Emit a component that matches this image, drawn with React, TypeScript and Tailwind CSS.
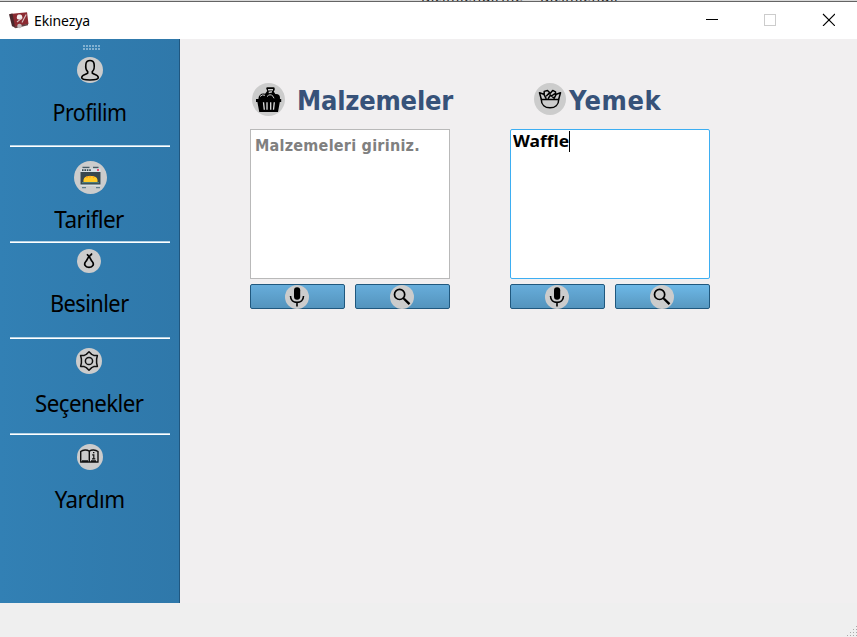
import type { ReactNode } from "react";

const sans = "font-['Noto_Sans','Liberation_Sans',sans-serif]";
const bold = "font-['DejaVu_Sans_Condensed','DejaVu_Sans',sans-serif] font-bold [font-stretch:condensed]";

function Profile() {
  return (
    <svg viewBox="0 0 26 26" className="size-[26px] shrink-0">
      <circle cx="13" cy="13" r="13" fill="#ccc" />
      <path d="M10.7 16.2 V14.6 C8.9 13 8.5 9.8 8.9 7 C9.3 4.5 11 3.5 13 3.5 S16.7 4.5 17.1 7 C17.5 9.8 17.1 13 15.3 14.6 V16.2 C17.5 18 21.3 17.6 21.3 20.8 C21.3 22.6 17.5 23 13 23 S4.7 22.6 4.7 20.8 C4.7 17.6 8.5 18 10.7 16.2 Z" fill="none" stroke="#000" strokeWidth="1.6" />
    </svg>
  );
}

function Oven() {
  return (
    <svg viewBox="0 0 33 33" className="ml-px size-[33px] shrink-0">
      <circle cx="16.5" cy="16.5" r="16.5" fill="#ccc" />
      <path d="M8.5 6.5h7M19 6.5h5.5" stroke="#455a64" strokeWidth="1.3" />
      <rect x="6.5" y="7.5" width="20" height="17.5" fill="#d7dfe3" />
      <path d="M8 9.2h9" stroke="#37474f" strokeWidth="1.8" strokeDasharray="1.6 .8" />
      <circle cx="24" cy="9.1" r="1" fill="#e91e4d" />
      <rect x="6.5" y="11" width="20" height="12.5" fill="#37474f" />
      <path d="M8 21.7h17" stroke="#548a86" />
      <path d="M9.5 21 C9 17 11 15 16.5 15 S24 17 23.5 21Z" fill="#ffca28" />
      <path d="M13 15v2M16 14.8v2M19.5 15v2" stroke="#fb9826" strokeWidth="1.2" />
      <path d="M8 26.7h4M22 26.7h4" stroke="#607d8b" strokeWidth="1.3" />
    </svg>
  );
}

function Pear() {
  return (
    <svg viewBox="0 0 24 24" className="mr-[2px] size-6 shrink-0">
      <circle cx="12" cy="12" r="12" fill="#ccc" />
      <path d="M12 8 C10.6 8.5 10.2 11 8.8 12.5 C6.5 15 8 18.3 12 18.3 S17.5 15 15.2 12.5 C13.8 11 13.4 8.5 12 8Z M12 8 L15 4.5 M12.2 7.7 L10 5.2 M12.5 6.5 L14.8 5.5" fill="none" stroke="#000" strokeWidth="1.7" />
    </svg>
  );
}

function Gear() {
  return (
    <svg viewBox="0 0 26 26" className="mr-[2px] size-[26px] shrink-0">
      <circle cx="13" cy="13" r="13" fill="#ccc" />
      <path d="M10.3 6.4 L13 3.8 L15.7 6.4 L17.8 7.4 L21.4 7.6 L20.6 11 V15 L21.4 18.4 L17.8 18.6 L15.7 19.6 L13 22.2 L10.3 19.6 L8.2 18.6 L4.6 18.4 L5.4 15 V11 L4.6 7.6 L8.2 7.4Z" fill="none" stroke="#111" strokeWidth="1.5" strokeLinejoin="round" />
      <circle cx="13" cy="13" r="3.6" fill="none" stroke="#111" strokeWidth="1.5" />
    </svg>
  );
}

function Book() {
  return (
    <svg viewBox="0 0 26 26" className="size-[26px] shrink-0">
      <circle cx="13" cy="13" r="13" fill="#ccc" />
      <path d="M3.7 17.5 V7.5 C6 5.7 10 5.5 12.3 7.2 C14.5 5.5 18.5 5.7 21 7.5 V17.5 M12.3 7V17.2 M3.1 18H21.6 M5 17h6M14 17h5" fill="none" stroke="#111" strokeWidth="1.4" />
      <path d="M15.2 10.8h1.6v4M15 14.8h3.3M16 8.7h1.4" fill="none" stroke="#111" strokeWidth="1.2" />
    </svg>
  );
}

function Basket() {
  return (
    <svg viewBox="0 0 33 33" className="size-[33px] shrink-0">
      <circle cx="16.5" cy="16.5" r="16.5" fill="#ccc" />
      <path d="M14.2 5.4 Q14.2 4.2 15.4 4.2 H21.5 Q22.7 4.2 22.7 5.5 V7 L21.7 8.5 L24 12 V16 H13 V11 L15.2 8Z" fill="#000" />
      <path d="M16 6.7h5M16.7 9.5l3.2-.7" stroke="#ccc" strokeWidth="1.4" />
      <circle cx="11.5" cy="15.5" r="5" fill="#000" />
      <circle cx="24" cy="15" r="4" fill="#000" />
      <path d="M8 13.5q2-2.5 5-1.2M15 13.6q3-3.5 6-.3l1 2" fill="none" stroke="#ccc" strokeWidth="1" />
      <path d="M4 16h25.2v3h-1.4L26 29H7.3L5.4 19H4Z" fill="#000" />
      <path d="M11.5 19.3l.8 7.5M15 19.3v7.5M18.7 19.3v7.5M22.3 19.3l-.8 7.5" stroke="#ddd" strokeWidth="1.3" />
    </svg>
  );
}

function Bowl() {
  return (
    <svg viewBox="0 0 32 32" className="size-8 shrink-0">
      <circle cx="16" cy="16" r="16" fill="#ccc" />
      <path d="M7.3 16.4h17.4C24.7 22 21 24.8 16 24.8S7.3 22 7.3 16.4Z" fill="none" stroke="#000" strokeWidth="1.5" />
      <path d="M7.3 16.2L5.5 9.7L9.8 11.2L12.3 15.8M24.7 16.2L26.5 9.7L22.3 11.2L19.8 15.8M10.2 11.5V8.4L13.5 7.5L15.6 9.5L12.2 13.2M13.8 11.5L16.5 10M16.3 10.2L18.7 7.4L21.5 8.9V12M14 15.8L16.5 12L20 15.2M17.5 13L20.8 10.7" fill="none" stroke="#000" strokeWidth="1.5" strokeLinejoin="round" />
    </svg>
  );
}

function Mic() {
  return (
    <svg viewBox="0 0 24 24" className="size-6 shrink-0">
      <circle cx="12" cy="12" r="12" fill="#ccc" />
      <rect x="9" y="2.2" width="6.2" height="12.5" rx="3" fill="#000" />
      <path d="M5.5 11 C5.5 19.5 18.5 19.5 18.5 11M12 17.5v4" fill="none" stroke="#000" strokeWidth="1.6" />
    </svg>
  );
}

function Lens() {
  return (
    <svg viewBox="0 0 24 24" className="size-6 shrink-0">
      <circle cx="12" cy="12" r="12" fill="#ccc" />
      <circle cx="9.6" cy="9.4" r="5.1" fill="none" stroke="#000" strokeWidth="1.7" />
      <path d="M13 12.8l1.5 1.5" stroke="#000" strokeWidth="1.7" />
      <path d="M14.2 14L19.5 19.1" stroke="#000" strokeWidth="2.4" />
    </svg>
  );
}

function NavItem({ icon, label, pad, gap, width }: { icon: ReactNode; label: string; pad: string; gap: string; width: string }) {
  return (
    <div className={`flex h-24 w-[179px] shrink-0 flex-col items-center ${pad}`}>
      {icon}
      <span className={`text-[24px] leading-7 tracking-[-0.6px] whitespace-nowrap text-black ${gap} ${width}`}>{label}</span>
    </div>
  );
}

function Separator() {
  return <div className="-mt-[2px] mr-[9px] ml-[10px] h-[2px] shrink-0 border-t border-[#b7d3e5] bg-white" />;
}

function Action({ children, bright }: { children: ReactNode; bright?: boolean }) {
  return (
    <button className={`flex h-[25px] w-[95px] items-center justify-center rounded-[2px] border border-[#20587e] bg-linear-to-b pr-px ${bright ? "from-[#6db8e7] to-[#5898c0]" : "from-[#67addb] to-[#5494bd]"}`}>
      {children}
    </button>
  );
}

function AppIcon() {
  return (
    <svg viewBox="0 0 20 19" className="h-[19px] w-5">
      <path d="M1 3L18 1.3L19.5 13L5 16.5Z" fill="#8c2a31" />
      <path d="M0 3.2l3.5-.7L6 16.3l-3-1Z" fill="#49282c" />
      <path d="M5 15.8l14-3.1v1.6L6.5 17.3Z" fill="#5d4446" />
      <path d="M8 5.2C8 3 13 3 13.2 5.5C14 7.7 12.5 9 10.8 8.4C8.5 9 7.2 7.5 8 5.2Z" fill="#f4eeee" />
      <path d="M8 11l4.5-3.6M13 11.5l4.2-8" stroke="#d7c1c3" strokeWidth="1.1" />
      <circle cx="10.5" cy="15" r="2.3" fill="#c5bdbd" />
    </svg>
  );
}

const gripRows = [1, 2, 3, 4];

export default function App() {
  return (
    <div className={`flex h-[637px] w-[857px] flex-col overflow-hidden bg-[#f1eff0] ${sans}`}>
      <div className="flex h-[2px] shrink-0 items-end overflow-hidden border-b border-[#646464] bg-[#d9d9d9] pl-[421px] text-[14px] leading-3 tracking-[0.55px] text-[#222]">
        <span className="mb-[-2px] whitespace-nowrap">Biçimlendirme * Biçimlendir *</span>
      </div>
      <header className="flex h-[37px] shrink-0 items-center bg-white pl-[9px]">
        <AppIcon />
        <span className="ml-[5px] text-[14px] tracking-[-0.1px] text-black">Ekinezya</span>
        <svg viewBox="0 0 130 14" className="mr-[22px] mb-[3px] ml-auto h-[14px] w-[130px]" fill="none">
          <path d="M1 7.5h12" stroke="#000" />
          <rect x="59.5" y="2.5" width="11" height="11" stroke="#ccc" />
          <path d="M118 2l12 12M130 2l-12 12" stroke="#000" strokeWidth="1.1" />
        </svg>
      </header>
      <main className="flex h-[564px] shrink-0">
        <nav className="flex w-[180px] flex-col border-r border-[#205780] bg-linear-to-r from-[#3280b4] to-[#2f78aa]">
          <div className="flex h-3 shrink-0 items-start justify-center pt-[6px] pl-[3px]">
            <div className="grid grid-cols-6 gap-px">
              {[...Array(12)].map((_, i) => <i key={i} className="size-[2px] bg-[#82b1d1]" />)}
            </div>
          </div>
          <NavItem icon={<Profile />} label="Profilim" pad="pt-[6px]" gap="mt-[15px]" width="scale-x-[0.89]" />
          <Separator />
          <NavItem icon={<Oven />} label="Tarifler" pad="pt-[14px]" gap="mt-[11px]" width="scale-x-[0.94]" />
          <Separator />
          <NavItem icon={<Pear />} label="Besinler" pad="pt-[6px]" gap="mt-[16px]" width="scale-x-[0.91]" />
          <Separator />
          <NavItem icon={<Gear />} label="Seçenekler" pad="pt-[9px]" gap="mt-[15px]" width="scale-x-[0.93]" />
          <Separator />
          <NavItem icon={<Book />} label="Yardım" pad="pt-[9px]" gap="mt-[15px]" width="scale-x-[0.93]" />
        </nav>
        <div className={`flex gap-[60px] pt-[44px] pl-[70px] ${bold}`}>
          <section className="w-[200px]">
            <div className="flex h-[46px] items-start pl-[2px]">
              <Basket />
              <h1 className="ml-[12px] text-[27px] leading-[35px] tracking-[-0.2px] whitespace-nowrap text-[#375279]">Malzemeler</h1>
            </div>
            <div className="h-[150px] border border-[#b9b9b9] bg-white pt-[5px] pl-[4px] text-[16px] leading-[21px] tracking-[0.25px] whitespace-nowrap text-[#808080]">Malzemeleri giriniz.</div>
            <div className="mt-[5px] flex gap-[10px]">
              <Action><Mic /></Action>
              <Action><Lens /></Action>
            </div>
          </section>
          <section className="w-[200px]">
            <div className="flex h-[46px] items-start pl-6">
              <Bowl />
              <h1 className="ml-[3px] text-[27px] leading-[35px] tracking-[0.5px] whitespace-nowrap text-[#375279]">Yemek</h1>
            </div>
            <div className="flex h-[150px] items-start rounded-[2px] border border-[#3daef2] bg-white pt-px pl-[2px] font-['Noto_Sans',sans-serif] text-[16px] leading-[21px] text-black">
              <span className="w-14 origin-left scale-x-[1.09] whitespace-nowrap">Waffle</span>
              <span className="h-[21px] w-px bg-black" />
            </div>
            <div className="mt-[5px] flex gap-[10px]">
              <Action><Mic /></Action>
              <Action bright><Lens /></Action>
            </div>
          </section>
        </div>
      </main>
      <footer className="flex h-[34px] shrink-0 flex-col items-end justify-end gap-[2px] bg-[#efefef] pb-px">
        {gripRows.map((n) => (
          <div key={n} className="flex gap-[2px]">
            {[...Array(n)].map((_, i) => <i key={i} className="size-px bg-[#aaa]" />)}
          </div>
        ))}
      </footer>
    </div>
  );
}
